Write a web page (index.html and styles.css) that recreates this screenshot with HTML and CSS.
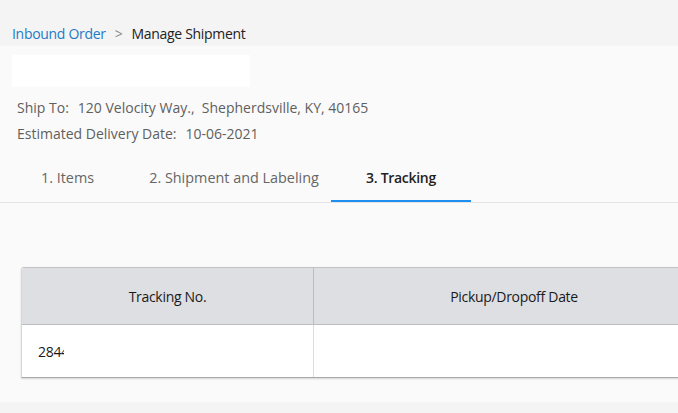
FILE: index.html
```html
<!DOCTYPE html>
<html>
<head>
<meta charset="utf-8">
<link rel="stylesheet" href="styles.css">
</head>
<body>
<div class="topbar">
  <a class="crumb-link">Inbound Order</a>
  <span class="crumb-sep">&gt;</span>
  <span class="crumb-current">Manage Shipment</span>
</div>
<div class="panel">
  <div class="blank"></div>
  <div class="info">
    <div class="info-line"><span class="label">Ship To:</span><span>120 Velocity Way.,&nbsp; Shepherdsville, KY, 40165</span></div>
    <div class="info-line"><span class="label">Estimated Delivery Date:</span><span>10-06-2021</span></div>
  </div>
  <div class="tabs">
    <div class="tab tab-1">1. Items</div>
    <div class="tab tab-2">2. Shipment and Labeling</div>
    <div class="tab tab-3 active">3. Tracking</div>
  </div>
  <div class="table">
    <div class="row head">
      <div class="cell c1">Tracking No.</div>
      <div class="cell c2">Pickup/Dropoff Date</div>
    </div>
    <div class="row body">
      <div class="cell c1"><span class="clip">2844</span></div>
      <div class="cell c2"></div>
    </div>
  </div>
</div>
</body>
</html>
```

FILE: styles.css
```css
html, body {
  margin: 0;
  padding: 0;
  background: #f4f4f4;
  font-family: "Open Sans", "Noto Sans", sans-serif;
  font-size: 14px;
  letter-spacing: -0.3px;
  overflow: hidden;
}
.topbar {
  height: 46px;
  box-sizing: border-box;
  padding: 25px 0 0 12px;
  line-height: 18px;
  display: flex;
}
.crumb-link {
  color: #1e7ac8;
}
.crumb-sep {
  color: #8a8a8a;
  margin: 0 9px 0 9px;
}
.crumb-current {
  color: #222;
}
.panel {
  background: #fafafa;
  height: 356px;
  overflow: hidden;
  padding-top: 9px;
  box-sizing: border-box;
}
.blank {
  width: 238px;
  height: 32px;
  background: #fff;
  margin-left: 12px;
}
.info {
  margin-top: 8px;
  padding-left: 17px;
  color: #5f5f5f;
  letter-spacing: 0;
}
.info-line {
  line-height: 26px;
  display: flex;
}
.label {
  margin-right: 9px;
}
.tabs {
  margin-top: 8px;
  display: flex;
  border-bottom: 1px solid #e4e4e4;
}
.tab {
  height: 45px;
  line-height: 45px;
  text-align: center;
  color: #666;
  font-size: 14.4px;
  letter-spacing: 0;
  border-bottom: 2px solid transparent;
}
.tab-1 { width: 135px; }
.tab-2 { width: 194px; margin-left: 2px; }
.tab-3 { width: 140px; }
.tab.active {
  color: #222;
  font-weight: 600;
  font-size: 14px;
  letter-spacing: -0.3px;
  border-bottom-color: #1e8ff0;
}
.table {
  margin: 64px 0 0 21px;
  width: 700px;
  border-top: 1px solid #c2c2c6;
  border-left: 1px solid #d6d6d6;
  border-top-left-radius: 3px;
  border-bottom: 1px solid #a9a9a9;
  box-shadow: 0 1px 2px rgba(0,0,0,0.15);
  overflow: hidden;
}
.row {
  display: flex;
}
.head {
  background: #dedfe3;
  height: 56px;
  border-bottom: 1px solid #bdbdc1;
  color: #1a1a1a;
}
.body {
  background: #fff;
  height: 52px;
  color: #1a1a1a;
}
.cell {
  display: flex;
  align-items: center;
  box-sizing: border-box;
}
.head .cell {
  justify-content: center;
}
.c1 {
  width: 292px;
  border-right: 1px solid #bdbdc1;
}
.body .c1 {
  border-right-color: #dcdcdc;
  padding-left: 16px;
}
.c2 {
  width: 400px;
}
.clip {
  display: inline-block;
  width: 26px;
  overflow: hidden;
  white-space: nowrap;
}
```
